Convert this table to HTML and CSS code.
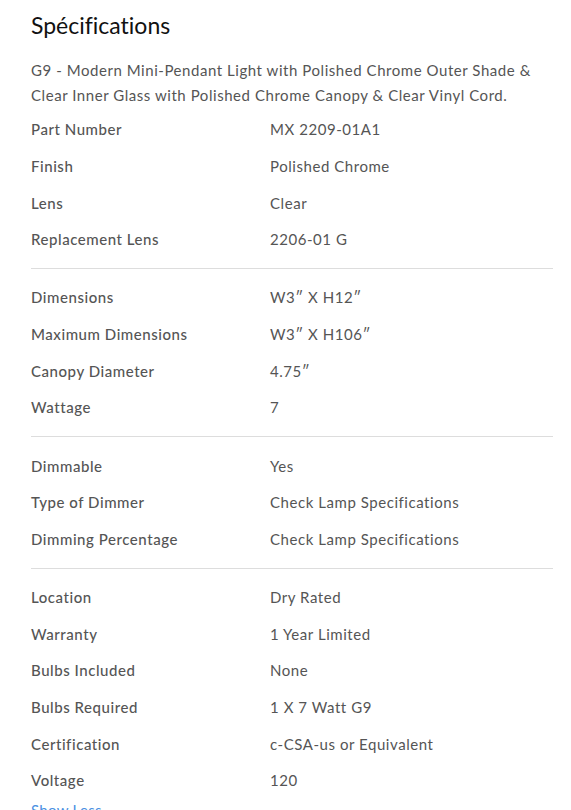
FILE: index.html
```html
<!DOCTYPE html>
<html>
<head>
<meta charset="utf-8">
<link rel="stylesheet" href="styles.css">
</head>
<body>
<section class="specs">
  <h2 class="specs-title">Spécifications</h2>
  <p class="specs-desc">G9 - Modern Mini-Pendant Light with Polished Chrome Outer Shade &amp; Clear Inner Glass with Polished Chrome Canopy &amp; Clear Vinyl Cord.</p>
  <div class="group">
    <div class="row"><span class="label">Part Number</span><span class="value">MX 2209-01A1</span></div>
    <div class="row"><span class="label">Finish</span><span class="value">Polished Chrome</span></div>
    <div class="row"><span class="label">Lens</span><span class="value">Clear</span></div>
    <div class="row"><span class="label">Replacement Lens</span><span class="value">2206-01 G</span></div>
  </div>
  <div class="group">
    <div class="row"><span class="label">Dimensions</span><span class="value">W3″ X H12″</span></div>
    <div class="row"><span class="label">Maximum Dimensions</span><span class="value">W3″ X H106″</span></div>
    <div class="row"><span class="label">Canopy Diameter</span><span class="value">4.75″</span></div>
    <div class="row"><span class="label">Wattage</span><span class="value">7</span></div>
  </div>
  <div class="group">
    <div class="row"><span class="label">Dimmable</span><span class="value">Yes</span></div>
    <div class="row"><span class="label">Type of Dimmer</span><span class="value">Check Lamp Specifications</span></div>
    <div class="row"><span class="label">Dimming Percentage</span><span class="value">Check Lamp Specifications</span></div>
  </div>
  <div class="group last">
    <div class="row"><span class="label">Location</span><span class="value">Dry Rated</span></div>
    <div class="row"><span class="label">Warranty</span><span class="value">1 Year Limited</span></div>
    <div class="row"><span class="label">Bulbs Included</span><span class="value">None</span></div>
    <div class="row"><span class="label">Bulbs Required</span><span class="value">1 X 7 Watt G9</span></div>
    <div class="row"><span class="label">Certification</span><span class="value">c-CSA-us or Equivalent</span></div>
    <div class="row"><span class="label">Voltage</span><span class="value">120</span></div>
  </div>
  <a class="toggle" href="#">Show Less</a>
</section>
</body>
</html>
```

FILE: styles.css
```css
html, body {
  margin: 0;
  padding: 0;
  background: #fff;
}
body {
  font-family: Lato, "Open Sans", sans-serif;
  color: #555;
  font-variant-ligatures: none;
}
.specs {
  padding: 8px 18px 0 31px;
}
.specs-title {
  margin: 0;
  font-size: 23px;
  font-weight: 400;
  line-height: 34px;
  color: #111;
}
.specs-desc {
  margin: 16px 0 3px;
  font-size: 15px;
  line-height: 25px;
  letter-spacing: 0.55px;
  color: #555;
}
.group {
  border-bottom: 1px solid #ddd;
  padding-bottom: 10.5px;
  margin-bottom: 10px;
}
.group.last {
  border-bottom: none;
  padding-bottom: 0;
  margin-bottom: 0;
}
.row {
  display: grid;
  grid-template-columns: 239px 1fr;
  height: 36.67px;
  align-items: center;
  font-size: 15px;
  letter-spacing: 0.55px;
}
.label {
  color: #555;
  font-weight: 500;
}
.value {
  color: #555;
}
.toggle {
  display: block;
  font-size: 15px;
  line-height: 22px;
  color: #4a90e2;
  text-decoration: none;
  letter-spacing: 0.3px;
}
```
